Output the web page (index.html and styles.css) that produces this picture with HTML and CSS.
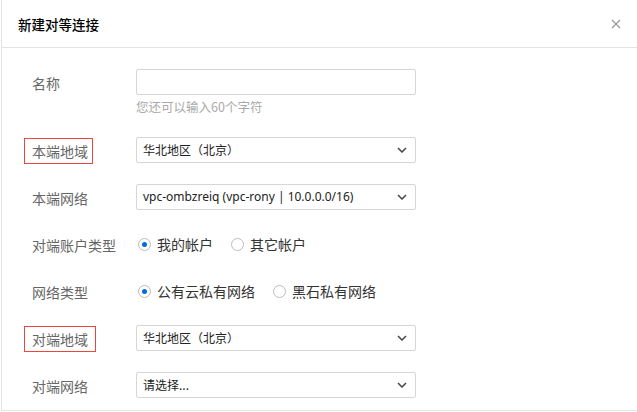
FILE: index.html
```html
<!DOCTYPE html>
<html lang="zh-CN">
<head>
<meta charset="utf-8">
<title>新建对等连接</title>
<link rel="stylesheet" href="styles.css">
</head>
<body>
<div class="dialog">
  <div class="dialog-header">
    <h2 class="dialog-title">新建对等连接</h2>
    <button class="dialog-close" aria-label="关闭">
      <svg width="10" height="10" viewBox="0 0 10 10"><path d="M1 1L9 9M9 1L1 9" stroke="#9a9a9a" stroke-width="1.3" fill="none"/></svg>
    </button>
  </div>
  <div class="dialog-body">
    <div class="row row-hint">
      <div class="label"><span class="label-text">名称</span></div>
      <div class="control">
        <input class="text-input" type="text">
        <div class="hint">您还可以输入60个字符</div>
      </div>
    </div>
    <div class="row">
      <div class="label"><span class="label-text marked marked-a">本端地域</span></div>
      <div class="control">
        <div class="select"><span class="select-value">华北地区（北京）</span><svg class="chev" width="10" height="6" viewBox="0 0 10 6"><path d="M1 1L5 5L9 1" stroke="#444" stroke-width="1.5" fill="none"/></svg></div>
      </div>
    </div>
    <div class="row">
      <div class="label"><span class="label-text">本端网络</span></div>
      <div class="control">
        <div class="select"><span class="select-value latin">vpc-ombzreiq (vpc-rony | 10.0.0.0/16)</span><svg class="chev" width="10" height="6" viewBox="0 0 10 6"><path d="M1 1L5 5L9 1" stroke="#444" stroke-width="1.5" fill="none"/></svg></div>
      </div>
    </div>
    <div class="row">
      <div class="label"><span class="label-text">对端账户类型</span></div>
      <div class="control radios">
        <label class="radio checked"><span class="dot"></span>我的帐户</label>
        <label class="radio"><span class="dot"></span>其它帐户</label>
      </div>
    </div>
    <div class="row">
      <div class="label"><span class="label-text">网络类型</span></div>
      <div class="control radios">
        <label class="radio checked"><span class="dot"></span>公有云私有网络</label>
        <label class="radio"><span class="dot"></span>黑石私有网络</label>
      </div>
    </div>
    <div class="row">
      <div class="label"><span class="label-text marked marked-b">对端地域</span></div>
      <div class="control">
        <div class="select"><span class="select-value">华北地区（北京）</span><svg class="chev" width="10" height="6" viewBox="0 0 10 6"><path d="M1 1L5 5L9 1" stroke="#444" stroke-width="1.5" fill="none"/></svg></div>
      </div>
    </div>
    <div class="row">
      <div class="label"><span class="label-text">对端网络</span></div>
      <div class="control">
        <div class="select"><span class="select-value">请选择...</span><svg class="chev" width="10" height="6" viewBox="0 0 10 6"><path d="M1 1L5 5L9 1" stroke="#444" stroke-width="1.5" fill="none"/></svg></div>
      </div>
    </div>
  </div>
</div>
</body>
</html>
```
FILE: styles.css
```css
* { box-sizing: border-box; }
html, body { margin: 0; padding: 0; background: #fff; overflow: hidden; }
body {
  font-family: "Noto Sans CJK SC", "Noto Sans", sans-serif;
  color: #333;
}
.dialog {
  margin: -1px 0 0 1px;
  width: 660px;
  height: 412px;
  border: 1px solid #e4e4e4;
  background: #fff;
}
.dialog-header {
  height: 48px;
  border-bottom: 1px solid #e2e2e2;
  display: flex;
  align-items: center;
  justify-content: space-between;
  padding: 0 39px 0 16px;
}
.dialog-title {
  margin: 0;
  font-size: 13.5px;
  font-weight: 500;
  color: #000;
  line-height: 20px;
  padding-top: 1px;
}
.dialog-close {
  border: 0;
  background: none;
  padding: 0;
  width: 10px;
  height: 10px;
  display: flex;
}
.dialog-body {
  padding: 21px 0 0 30px;
}
.row {
  display: flex;
  margin-bottom: 21px;
}
.label {
  width: 104px;
  height: 26px;
  display: flex;
  align-items: center;
  flex: none;
}
.label-text {
  font-size: 14px;
  color: #666;
  line-height: 20px;
  padding-top: 2px;
}
.marked {
  border: 1px solid #e8473f;
  margin-left: -8px;
  padding: 2px 0 2px 7px;
  line-height: 20px;
}
.marked-a { width: 69px; margin-top: 2px; }
.marked-b { width: 72px; margin-top: 2px; }
.control { width: 280px; }
.text-input {
  display: block;
  width: 280px;
  height: 26px;
  border: 1px solid #d6d6d6;
  border-radius: 2px;
  margin: 0;
}
.hint {
  margin-top: 3px;
  line-height: 18px;
  font-size: 12.5px;
  color: #aaa;
}
.select {
  height: 26px;
  border: 1px solid #d6d6d6;
  border-radius: 2px;
  display: flex;
  align-items: center;
  justify-content: space-between;
  padding: 0 8px 0 6px;
  font-size: 12px;
  color: #222;
}
.select-value { line-height: 20px; }
.latin { font-family: "Noto Sans", "Noto Sans CJK SC", sans-serif; font-size: 12px; }
.chev { display: block; }
.radios {
  display: flex;
  align-items: center;
  height: 26px;
  gap: 16px;
}
.radio {
  display: flex;
  align-items: center;
  font-size: 14px;
  color: #333;
  padding-left: 2px;
}
.dot {
  width: 13px;
  height: 13px;
  border: 1px solid #bdbdbd;
  border-radius: 50%;
  margin-right: 6px;
  position: relative;
}
.radio.checked .dot::after {
  content: "";
  position: absolute;
  left: 3px;
  top: 3px;
  width: 5px;
  height: 5px;
  border-radius: 50%;
  background: #006cd8;
}
```
